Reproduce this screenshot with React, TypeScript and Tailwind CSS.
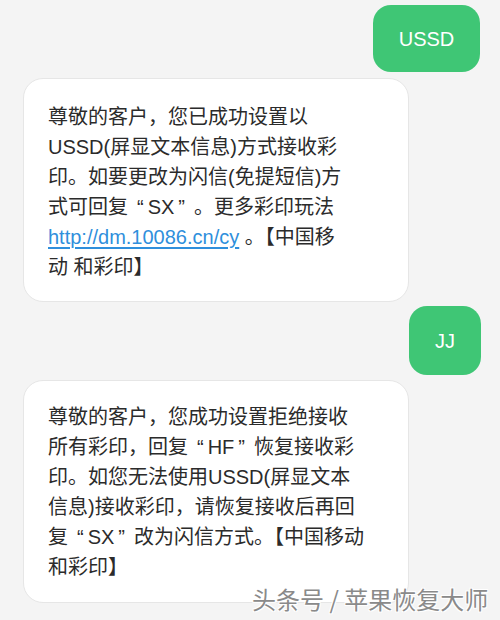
import React from "react";

const L = () => <span className="ml-[9px] mr-[4px]">“</span>;
const R = () => <span className="ml-[4px] mr-[9px]">”</span>;

export default function App() {
  return (
    <div
      className="relative w-[500px] h-[620px] overflow-hidden bg-[#f4f4f4] text-[#2b2b2b]"
      style={{ fontFamily: '"Liberation Sans", "Noto Sans CJK SC", sans-serif' }}
    >
      <div className="flex flex-col pt-[5px]">
        <div className="flex justify-end pr-[20px]">
          <div className="w-[107px] h-[67px] rounded-[18px] bg-[#3fc675] text-white text-[20px] flex items-center justify-center">
            USSD
          </div>
        </div>
        <div className="flex pl-[23px] mt-[6px]">
          <div className="w-[386px] h-[224px] rounded-[20px] bg-white border border-[#e6e6e6] pl-[24px] pt-[23px] text-[20px] leading-[30px]">
            尊敬的客户，您已成功设置以
            <br />
            USSD(屏显文本信息)方式接收彩
            <br />
            印。如要更改为闪信(免提短信)方
            <br />
            式可回复<L />SX<R />。更多彩印玩法
            <br />
            <span className="text-[#2f8fdc] underline underline-offset-[3px]">http://dm.10086.cn/cy</span>{" "}
            。【中国移
            <br />
            动 和彩印】
          </div>
        </div>
        <div className="flex justify-end pr-[19px] mt-[4px]">
          <div className="w-[72px] h-[69px] rounded-[18px] bg-[#3fc675] text-white text-[20px] flex items-center justify-center">
            JJ
          </div>
        </div>
        <div className="flex pl-[23px] mt-[5px]">
          <div className="w-[386px] h-[223px] rounded-[20px] bg-white border border-[#e6e6e6] pl-[24px] pt-[21px] text-[20px] leading-[30px]">
            尊敬的客户，您成功设置拒绝接收
            <br />
            所有彩印，回复<L />HF<R />恢复接收彩
            <br />
            印。如您无法使用USSD(屏显文本
            <br />
            信息)接收彩印，请恢复接收后再回
            <br />
            复<L />SX<R />改为闪信方式。【中国移动
            <br />
            和彩印】
          </div>
        </div>
      </div>
      <div
        className="absolute left-[252px] top-[584px] text-[24px] leading-[30px] text-[#8a8a8a] whitespace-nowrap"
        style={{
          fontFamily: '"Noto Sans CJK SC", sans-serif',
          textShadow: "1px 1px 0 #fff, -1px -1px 0 #fff, 1px -1px 0 #fff, -1px 1px 0 #fff",
        }}
      >
        头条号 / 苹果恢复大师
      </div>
    </div>
  );
}
